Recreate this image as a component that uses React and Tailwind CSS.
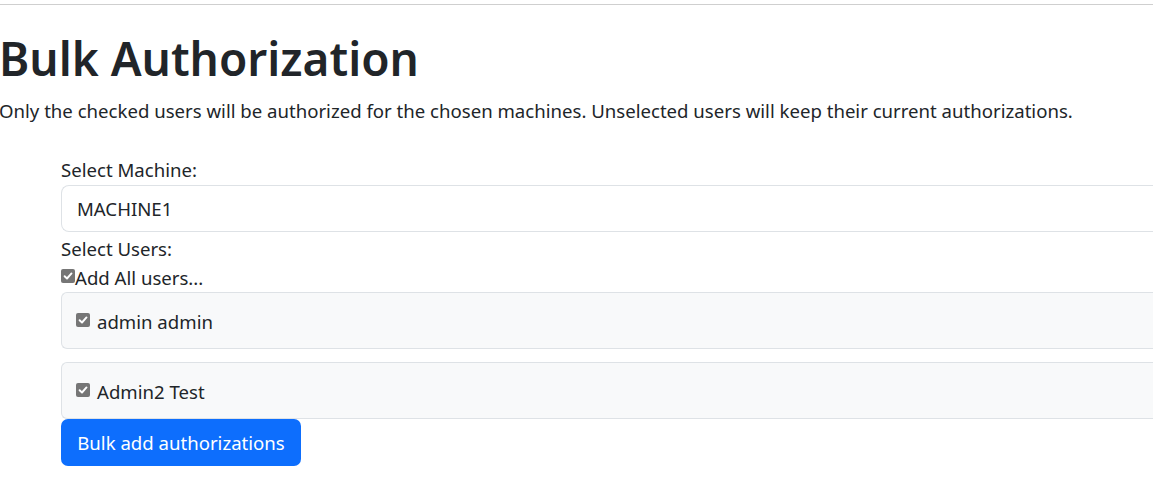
import React from "react";

function Check({ className = "" }) {
  return (
    <span className={`flex items-center justify-center w-[14px] min-w-[14px] h-[14px] rounded-[2px] bg-[#767676] ${className}`}>
      <svg width="12" height="12" viewBox="0 0 12 12" fill="none">
        <path d="M2.6 6.2 L5 8.5 L9.5 3.4" stroke="white" strokeWidth="1.9" strokeLinecap="round" strokeLinejoin="round" />
      </svg>
    </span>
  );
}

export default function App() {
  const users = ["admin admin", "Admin2 Test"];
  return (
    <div className="w-[1153px] h-[479px] overflow-hidden bg-white text-[#212529] font-['Noto_Sans',sans-serif]">
      <div className="h-[4px]" />
      <div className="border-t border-[#cfcfcf]" />
      <h1 className="mt-[24px] text-[46px] leading-[58px] font-semibold -ml-[1px] whitespace-nowrap">Bulk Authorization</h1>
      <p className="mt-[9px] text-[18.6px] leading-[30px] -ml-[1px] whitespace-nowrap">
        Only the checked users will be authorized for the chosen machines. Unselected users will keep their current authorizations.
      </p>
      <div className="ml-[61px] mt-[27px] text-[18.6px]">
        <div className="h-[32px] leading-[32px] pt-[1px]">Select Machine:</div>
        <div className="h-[47px] border border-[#dee2e6] rounded-l-[8px] border-r-0 flex items-center pl-[15px]">MACHINE1</div>
        <div className="h-[31px] leading-[31px] mt-[1px]">Select Users:</div>
        <div className="h-[28px] flex items-center">
          <Check className="-mt-[4px]" />
          <span className="leading-[28px]">Add All users...</span>
        </div>
        <div className="flex flex-col gap-[13px]">
          {users.map((u) => (
            <div key={u} className="h-[57px] bg-[#f8f9fa] border border-[#dee2e6] border-r-0 rounded-l-[6px] flex items-center pl-[14px] gap-[7px]">
              <Check className="-mt-[1px]" />
              <span className="pt-[3px]">{u}</span>
            </div>
          ))}
        </div>
        <button className="mt-[0px] h-[47px] w-[240px] bg-[#0d6efd] text-white rounded-[7px] text-[18.6px] flex items-center justify-center">
          Bulk add authorizations
        </button>
      </div>
    </div>
  );
}
